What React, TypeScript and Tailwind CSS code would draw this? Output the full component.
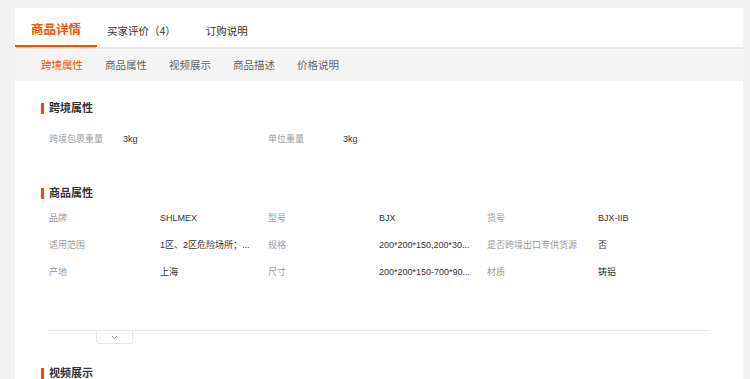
import { ReactNode } from 'react';

const font = { fontFamily: '"Liberation Sans", "Noto Sans CJK SC", sans-serif' };

function SectionTitle({ children }: { children: ReactNode }) {
  return (
    <div className="flex items-center h-[14px]">
      <span className="w-[3px] h-[11px] bg-[#ff4400] mr-[5px]" />
      <span className="text-[11px] leading-[14px] font-bold text-[#333]">{children}</span>
    </div>
  );
}

function Attr({ label, value, labelW, valueW }: { label: string; value: string; labelW: string; valueW: string }) {
  return (
    <div className="flex items-center">
      <span className={`${labelW} text-[9px] text-[#999] whitespace-nowrap`}>{label}</span>
      <span className={`${valueW} text-[9px] text-[#333] whitespace-nowrap`}>{value}</span>
    </div>
  );
}

// values are shown already shortened, as on the page
const props = [
  [
    ['品牌', 'SHLMEX'],
    ['型号', 'BJX'],
    ['货号', 'BJX-IIB'],
  ],
  [
    ['适用范围', '1区、2区危险场所；...'],
    ['规格', '200*200*150,200*30...'],
    ['是否跨境出口专供货源', '否'],
  ],
  [
    ['产地', '上海'],
    ['尺寸', '200*200*150-700*90...'],
    ['材质', '铸铝'],
  ],
];

export default function App() {
  return (
    <div className="min-h-screen bg-[#f2f2f2] pt-[8px] pl-[15px] pr-[7px]" style={font}>
      <div className="bg-white">
        {/* main tabs */}
        <div className="flex h-[39px] items-stretch">
          <div className="w-[82px] flex items-center justify-center pt-[7px] border-b-2 border-[#ff5000] text-[12.5px] font-bold text-[#ff5000]">
            商品详情
          </div>
          <div className="flex items-center pl-[10px] pt-[8px] text-[10.5px] text-[#333]">买家评价（4）</div>
          <div className="flex items-center pl-[30px] pt-[8px] text-[10.5px] text-[#333]">订购说明</div>
        </div>
        <div className="h-[2px] bg-[#e8e8e8]" />

        {/* sub nav */}
        <div className="h-[32px] bg-[#f4f4f4] border-t border-[#f9f9f9] flex items-center gap-[22px] pl-[26px] text-[10.5px] text-[#666]">
          <span className="text-[#ff5000]">跨境属性</span>
          <span>商品属性</span>
          <span>视频展示</span>
          <span>商品描述</span>
          <span>价格说明</span>
        </div>

        <div className="px-[26px] pt-[20px]">
          <SectionTitle>跨境属性</SectionTitle>
          <div className="flex pl-[8px] mt-[19px] h-[12px]">
            <Attr label="跨境包裹重量" value="3kg" labelW="w-[74px]" valueW="w-[145px]" />
            <Attr label="单位重量" value="3kg" labelW="w-[75px]" valueW="w-[145px]" />
          </div>

          <div className="mt-[40px]">
            <SectionTitle>商品属性</SectionTitle>
          </div>
          <div className="pl-[8px] mt-[5px]">
            {props.map((row, i) => (
              <div key={i} className="flex h-[27px] items-center">
                {row.map(([l, v]) => (
                  <Attr key={l} label={l} value={v} labelW="w-[111px]" valueW="w-[108px]" />
                ))}
              </div>
            ))}
          </div>

          <div className="mt-[44px] mx-[7px]">
            <div className="h-px bg-[#e6e6e6]" />
            <div className="ml-[48px] w-[37px] h-[13px] border border-t-0 border-[#e6e6e6] rounded-b-[3px] flex items-center justify-center">
              <svg width="7" height="5" viewBox="0 0 7 5" fill="none">
                <path d="M1 1l2.5 2.5L6 1" stroke="#999" strokeWidth="1" />
              </svg>
            </div>
          </div>

          <div className="mt-[22px] pb-[20px]">
            <SectionTitle>视频展示</SectionTitle>
          </div>
        </div>
      </div>
    </div>
  );
}
